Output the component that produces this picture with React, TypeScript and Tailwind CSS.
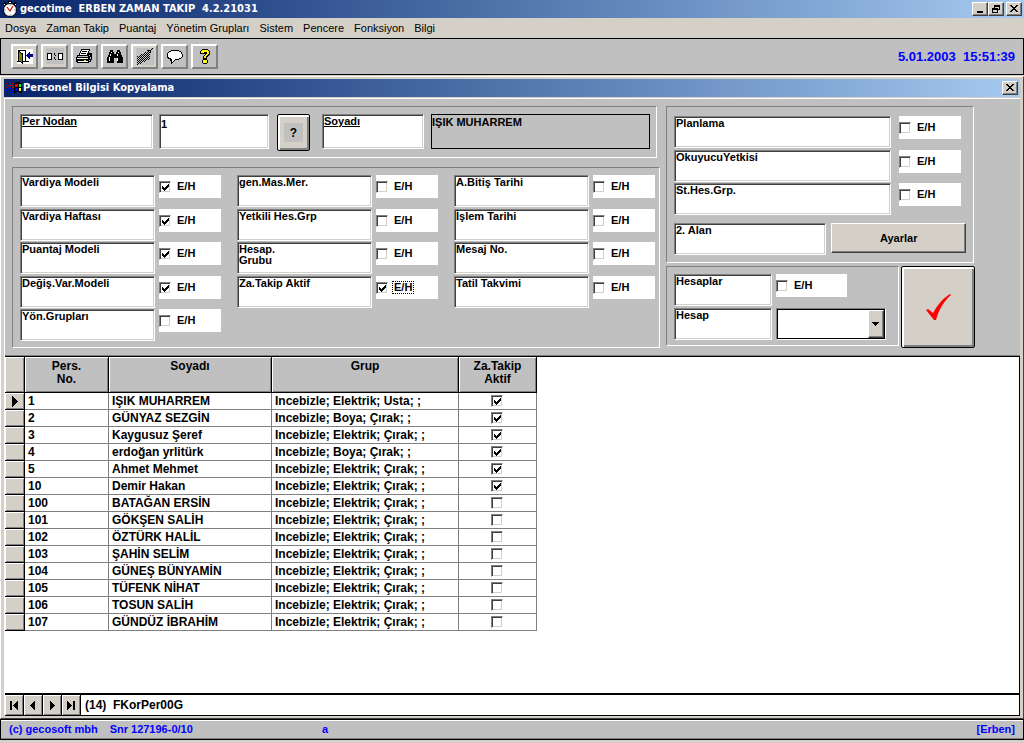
import { useState } from 'react';
import type { ReactNode } from 'react';

const SUNKEN =
    'border border-t-[#808080] border-l-[#808080] border-r-white border-b-white shadow-[inset_1px_1px_0_#404040,inset_-1px_-1px_0_#d4d0c8]';
const GROUP = 'border border-t-[#808080] border-l-[#808080] border-r-white border-b-white';
const RAISED =
    'border border-t-white border-l-white border-r-[#404040] border-b-[#404040] shadow-[inset_-1px_-1px_0_#808080]';
const TOOL =
    'border-2 border-t-white border-l-white border-r-[#808080] border-b-[#808080]';

interface FieldItem {
    id: string;
    label: string;
    checked?: boolean;
    focused?: boolean;
}

const modelFields: FieldItem[] = [
    { id: 'vardiya-modeli', label: 'Vardiya Modeli', checked: true },
    { id: 'vardiya-haftasi', label: 'Vardiya Haftası', checked: true },
    { id: 'puantaj-modeli', label: 'Puantaj Modeli', checked: true },
    { id: 'degis-var-modeli', label: 'Değiş.Var.Modeli', checked: true },
    { id: 'yon-gruplari', label: 'Yön.Grupları' },
];

const accountFields: FieldItem[] = [
    { id: 'gen-mas-mer', label: 'gen.Mas.Mer.' },
    { id: 'yetkili-hes-grp', label: 'Yetkili Hes.Grp' },
    { id: 'hesap-grubu', label: 'Hesap.\nGrubu' },
    { id: 'za-takip-aktif', label: 'Za.Takip Aktif', checked: true, focused: true },
];

const dateFields: FieldItem[] = [
    { id: 'bitis-tarihi', label: 'A.Bitiş Tarihi' },
    { id: 'islem-tarihi', label: 'İşlem Tarihi' },
    { id: 'mesaj-no', label: 'Mesaj No.' },
    { id: 'tatil-takvimi', label: 'Tatil Takvimi' },
];

const planFields: FieldItem[] = [
    { id: 'planlama', label: 'Planlama' },
    { id: 'okuyucu-yetkisi', label: 'OkuyucuYetkisi' },
    { id: 'st-hes-grp', label: 'St.Hes.Grp.' },
];

const people = [
    { no: '1', name: 'IŞIK MUHARREM', group: 'Incebizle; Elektrik; Usta; ;', active: true },
    { no: '2', name: 'GÜNYAZ SEZGİN', group: 'Incebizle; Boya; Çırak; ;', active: true },
    { no: '3', name: 'Kaygusuz Şeref', group: 'Incebizle; Elektrik; Çırak; ;', active: true },
    { no: '4', name: 'erdoğan yrlitürk', group: 'Incebizle; Boya; Çırak; ;', active: true },
    { no: '5', name: 'Ahmet Mehmet', group: 'Incebizle; Elektrik; Çırak; ;', active: true },
    { no: '10', name: 'Demir Hakan', group: 'Incebizle; Elektrik; Çırak; ;', active: true },
    { no: '100', name: 'BATAĞAN ERSİN', group: 'Incebizle; Elektrik; Çırak; ;', active: false },
    { no: '101', name: 'GÖKŞEN SALİH', group: 'Incebizle; Elektrik; Çırak; ;', active: false },
    { no: '102', name: 'ÖZTÜRK HALİL', group: 'Incebizle; Elektrik; Çırak; ;', active: false },
    { no: '103', name: 'ŞAHİN SELİM', group: 'Incebizle; Elektrik; Çırak; ;', active: false },
    { no: '104', name: 'GÜNEŞ BÜNYAMİN', group: 'Incebizle; Elektrik; Çırak; ;', active: false },
    { no: '105', name: 'TÜFENK NİHAT', group: 'Incebizle; Elektrik; Çırak; ;', active: false },
    { no: '106', name: 'TOSUN SALİH', group: 'Incebizle; Elektrik; Çırak; ;', active: false },
    { no: '107', name: 'GÜNDÜZ İBRAHİM', group: 'Incebizle; Elektrik; Çırak; ;', active: false },
];

const menuItems = ['Dosya', 'Zaman Takip', 'Puantaj', 'Yönetim Grupları', 'Sistem', 'Pencere', 'Fonksiyon', 'Bilgi'];

function StopwatchIcon() {
    return (
        <svg className="h-4 w-4" viewBox="0 0 16 16">
            <path d="M6 0h4v2H6zM1 3l2-2 2 2-2 2zM15 3l-2-2-2 2 2 2z" fill="#000" />
            <circle cx="8" cy="9" r="6.5" fill="#fff" stroke="#000" />
            <path d="M7 1h2v1H7zM2 3h1v1H2zM13 3h1v1h-1z" fill="#fff" />
            <path d="M5 6l3 4 3-5" fill="none" stroke="#e00000" strokeWidth="1.2" />
            <path d="M8 3.500v1M8 13.500v1M2.500 9h1M12.500 9h1" stroke="#444" />
        </svg>
    );
}

function FlagIcon() {
    return (
        <svg className="h-3 w-4" viewBox="0 0 16 12" shapeRendering="crispEdges">
            <path d="M9 1h1V0h4v1h2v10h-2v-1h-4v1H8V1z" fill="#000" />
            <path
                d="M0 1h1v1H0zM3 1h1v1H3zM6 1h1v1H6zM1 3h2v1H1zM4 3h1v1H4zM6 3h2v1H6zM0 5h1v1H0zM3 5h1v1H3zM6 5h2v1H6z"
                fill="#c00000"
            />
            <path
                d="M1 6h2v1H1zM4 6h2v1H4zM0 8h1v1H0zM3 8h1v1H3zM5 8h3v1H5zM1 10h1v1H1zM4 10h1v1H4zM6 10h2v1H6z"
                fill="#0000ff"
            />
            <path d="M9 2h3v3H9z" fill="#f00" />
            <path d="M13 2h2v3h-2z" fill="#0f0" />
            <path d="M9 6h3v3H9z" fill="#00f" />
            <path d="M13 6h2v3h-2z" fill="#ff0" />
        </svg>
    );
}

// Toolbar glyphs all share a 19x17 box so they sit on whole pixels inside the buttons
function ToolIcon({ viewBox, children }: { viewBox: string; children: ReactNode }) {
    return (
        <svg className="h-[17px] w-[19px]" viewBox={viewBox} shapeRendering="crispEdges">
            {children}
        </svg>
    );
}

function DoorIcon() {
    return (
        <ToolIcon viewBox="-2 -1 19 17">
            <path d="M0 0h16v15H0z" fill="#fff" />
            <path d="M1 1h8v11h3v1H0v-1h1zM8 2H3v10h5z" fillRule="evenodd" fill="#000" />
            <path d="M1 1h1v1h1v1h1v1h2v11H5v-1H4v-1H1z" fill="#000" />
            <path d="M2 3h1v1h1v1h1v8H4v-1H2z" fill="#808000" />
            <path d="M10 6V5h1V4h1V3h1v2h3v3h-3v2h-1V9h-1V8h-1V7H9V6z" fill="#000080" />
        </ToolIcon>
    );
}

function ClockIcon() {
    return (
        <ToolIcon viewBox="-2 0 19 17">
            <path d="M-1 0h18v16H-1z" fill="#c0c0c0" />
            <path d="M0 5h5v7H0zM11 5h5v7h-5z" fill="#000" />
            <path d="M1 6h3v5H1zM12 6h3v5h-3z" fill="#fff" />
            <path d="M7 5h1v2H7zM8 7h1v1H8zM7 9h1v2H7zM8 11h1v1H8z" fill="#000" />
        </ToolIcon>
    );
}

function PrinterIcon() {
    return (
        <ToolIcon viewBox="-1 -1 19 17">
            <path d="M5 0h9v2h-1v2h3v7h-1v2h-2v1H1v-1H0V8h1V6h2V4h1V2h1z" fill="#000" />
            <path d="M6 1h7v1h-1v2h-1v2H4V4h1V2h1z" fill="#fff" />
            <path d="M6 2h5v1H6zM5 4h5v1H5z" fill="#000" />
            <path d="M2 7h10v1H2z" fill="#c0c0c0" />
            <path d="M1 9h11v1H1zM2 12h10v1H2z" fill="#fff" />
            <path d="M8 11h2v1H8z" fill="#ff0" />
            <path d="M13 6h1v1h-1zM14 8h1v2h-1zM13 11h1v1h-1z" fill="#c0c0c0" />
        </ToolIcon>
    );
}

function BinocularsIcon() {
    return (
        <ToolIcon viewBox="-2 -2 19 17">
            <path d="M3 0h3v2h1v2h2V2h1V0h3v2h1v3h1v2h1v6h-6V8H7v5H0V7h1V5h1V2h1z" fill="#000" />
            <path d="M4 2h1v1H4zM3 4h1v2H3zM2 7h1v4H2zM11 2h1v1h-1zM10 4h1v2h-1zM10 8h1v3h-1z" fill="#fff" />
        </ToolIcon>
    );
}

function PlanIcon() {
    const dots: ReactNode[] = [];
    for (let col = 0; col < 13; col++) {
        const top = 8 - Math.floor(col / 2);
        for (let y = top; y < top + 9; y++) {
            if ((y + col) % 2 === 0) dots.push(<rect key={`${col}-${y}`} x={col} y={y} width="1" height="1" />);
        }
    }
    return (
        <ToolIcon viewBox="-2 0 19 17">
            <path d="M-1 0h18v17H-1z" fill="#c0c0c0" />
            {dots}
            <path d="M10 2h4v1h-4zM13 2h1v3h-1zM12 4h1v1h-1zM14 1h1v1h-1zM15 0h1v1h-1zM11 5h1v1h-1z" fill="#000" />
        </ToolIcon>
    );
}

function BubbleIcon() {
    return (
        <ToolIcon viewBox="-2 -2 19 17">
            <path d="M4 0h8v1h2v1h1v2h1v3h-1v1h-1v1h-2v1H8v1H7v1H6v1H5v1H4v-3H3V9H1V8H0V3h1V2h1V1h2z" fill="#000" />
            <path d="M4 1h8v1h2v2h1v3h-1v1h-2v1H8v1H7v1H6v1H5V9H4V8H2V7H1V3h1V2h2z" fill="#fff" />
        </ToolIcon>
    );
}

function HelpIcon() {
    return (
        <ToolIcon viewBox="-5 -1 19 17">
            <path d="M2 0h6v1h1v1h1v4H9v1H8v1H7v2H3V7h1V6h1V4H4v1H0V2h1V1h1zM3 10h4v1h1v3H7v1H3v-1H2v-3h1z" fill="#000" />
            <path d="M2 1h6v1h1v3H8v1H7v1H6v2H4V7h1V6h1V5h1V3H4v1H1V2h1zM3 11h4v3H3z" fill="#ff0" />
            <path d="M4 3h2v2H4z" fill="#000" />
        </ToolIcon>
    );
}

function Tick() {
    return (
        <svg
            className="pointer-events-none invisible absolute top-[3px] left-[3px] h-[7px] w-[7px] peer-checked:visible"
            viewBox="0 0 7 7"
            shapeRendering="crispEdges"
        >
            <path d="M0 2h1v1h1v1h1V3h1V2h1V1h1V0h1v3H6v1H5v1H4v1H3v1H2V6H1V5H0z" fill="#000" />
        </svg>
    );
}

function CheckBox({ id, label, defaultChecked }: { id?: string; label?: string; defaultChecked?: boolean }) {
    return (
        <span className="relative block h-3 w-3 shrink-0">
            <input
                id={id}
                type="checkbox"
                aria-label={label}
                defaultChecked={defaultChecked}
                className={`peer block h-3 w-3 appearance-none bg-white ${SUNKEN}`}
            />
            <Tick />
        </span>
    );
}

function YesNo({ item, className = 'w-[62px]' }: { item: FieldItem; className?: string }) {
    return (
        <div className={`flex h-[23px] items-center gap-1 bg-white ${className}`}>
            <CheckBox id={item.id} defaultChecked={item.checked} />
            <label
                htmlFor={item.id}
                className={`border border-dotted px-px leading-[11px] ${item.focused ? 'border-black' : 'border-transparent'}`}
            >
                E/H
            </label>
        </div>
    );
}

function Caption({ htmlFor, className, children }: { htmlFor: string; className: string; children: ReactNode }) {
    return (
        <label
            htmlFor={htmlFor}
            className={`block overflow-hidden bg-white px-px pt-px leading-[11px] whitespace-pre ${SUNKEN} ${className}`}
        >
            {children}
        </label>
    );
}

function FieldColumn({ items }: { items: FieldItem[] }) {
    return (
        <div className="grid grid-cols-[135px_62px] grid-rows-[34px_33px_34px_33px_32px] gap-x-1">
            {items.map((item) => (
                <div key={item.id} className="contents">
                    <Caption htmlFor={item.id} className="h-8">
                        {item.label}
                    </Caption>
                    <YesNo item={item} />
                </div>
            ))}
        </div>
    );
}

function WindowButton({ label, children }: { label: string; children: ReactNode }) {
    return (
        <button
            type="button"
            aria-label={label}
            className={`flex h-[14px] w-4 items-center justify-center bg-[#d4d0c8] ${RAISED}`}
        >
            <svg className="h-2 w-2" viewBox="0 0 8 8" shapeRendering="crispEdges">
                {children}
            </svg>
        </button>
    );
}

const closeGlyph = (
    <path d="M0 0h2v1h1v1h2V1h1V0h2v1H7v1H6v1H5v1h1v1h1v1h1v1H6V6H5V5H3v1H2v1H0V6h1V5h1V4h1V3H2V2H1V1H0z" />
);

function Toolbar() {
    const tools = [
        { label: 'Çıkış', icon: <DoorIcon />, face: 'bg-[#d4d0c8]' },
        { label: 'Saat', icon: <ClockIcon />, face: 'bg-[#d4d0c8]' },
        { label: 'Yazdır', icon: <PrinterIcon />, face: 'bg-[#c0c0c0]' },
        { label: 'Ara', icon: <BinocularsIcon />, face: 'bg-[#c0c0c0]' },
        { label: 'Plan', icon: <PlanIcon />, face: 'bg-[#d4d0c8]' },
        { label: 'Mesaj', icon: <BubbleIcon />, face: 'bg-[#c0c0c0]' },
        { label: 'Yardım', icon: <HelpIcon />, face: 'bg-[#c0c0c0]' },
    ];

    return (
        <div className="flex h-[37px] items-center justify-between border border-black bg-[#c0c0c0] pr-2 pl-[10px]">
            <div className="flex gap-[3px]">
                {tools.map((tool) => (
                    <button
                        key={tool.label}
                        type="button"
                        aria-label={tool.label}
                        className={`flex h-[25px] w-[27px] items-center justify-center ${tool.face} ${TOOL}`}
                    >
                        {tool.icon}
                    </button>
                ))}
            </div>
            <div className="text-[13px] font-bold whitespace-pre text-[#0000ff]">5.01.2003{'  '}15:51:39</div>
        </div>
    );
}

function CopyForm() {
    const [personNo, setPersonNo] = useState('1');

    return (
        <form className="flex items-start gap-[6px] border-b border-[#808080] bg-[#c0c0c0] p-[7px] text-[11px] font-bold">
            <div className="flex flex-col items-start gap-[9px]">
                <div className={`flex items-start pt-[7px] pr-[6px] pb-[6px] pl-[7px] ${GROUP}`}>
                    <Caption htmlFor="per-no" className="mr-[6px] h-[35px] w-[133px] underline">
                        Per Nodan
                    </Caption>
                    <input
                        id="per-no"
                        value={personNo}
                        onChange={(e) => setPersonNo(e.target.value)}
                        className={`mr-2 h-[35px] w-[110px] bg-white px-px pb-4 ${SUNKEN}`}
                    />
                    <button
                        type="button"
                        aria-label="Personel ara"
                        className="mr-3 flex h-[37px] w-[33px] items-center justify-center rounded-[2px] border border-black bg-[#d4d0c8] shadow-[inset_2px_2px_0_#fff,inset_-2px_-2px_0_#808080]"
                    >
                        <span className="flex h-[19px] w-[19px] items-center justify-center bg-[#c0c0c0] text-xs">?</span>
                    </button>
                    <Caption htmlFor="soyadi" className="mr-[7px] h-[35px] w-[102px] underline">
                        Soyadı
                    </Caption>
                    <output id="soyadi" className="h-[35px] w-[219px] border border-black leading-[14px]">
                        IŞIK MUHARREM
                    </output>
                </div>

                <div className={`flex gap-4 pt-[7px] pr-1 pb-[6px] pl-[7px] ${GROUP}`}>
                    <FieldColumn items={modelFields} />
                    <FieldColumn items={accountFields} />
                    <FieldColumn items={dateFields} />
                </div>
            </div>

            <div className="flex flex-col items-start gap-[3px]">
                <div className={`w-[308px] px-[7px] pt-[9px] pb-[7px] ${GROUP}`}>
                    <div className="grid grid-cols-[217px_62px] grid-rows-[34px_33px_32px] gap-x-2">
                        {planFields.map((item) => (
                            <div key={item.id} className="contents">
                                <Caption htmlFor={item.id} className="h-8">
                                    {item.label}
                                </Caption>
                                <YesNo item={item} />
                            </div>
                        ))}
                    </div>
                    <div className="mt-2 flex items-start gap-[5px]">
                        <Caption htmlFor="ayarlar" className="h-8 w-[153px]">
                            2. Alan
                        </Caption>
                        <button id="ayarlar" type="button" className={`h-[30px] w-[135px] bg-[#d4d0c8] ${RAISED}`}>
                            Ayarlar
                        </button>
                    </div>
                </div>

                <div className="flex items-start gap-[2px]">
                    <div className={`grid w-[233px] grid-cols-[98px_auto] gap-x-1 gap-y-[2px] pt-[7px] pb-[5px] pl-[7px] ${GROUP}`}>
                        <Caption htmlFor="hesaplar" className="h-8">
                            Hesaplar
                        </Caption>
                        <YesNo item={{ id: 'hesaplar', label: 'Hesaplar' }} className="w-[71px]" />
                        <Caption htmlFor="hesap" className="h-8">
                            Hesap
                        </Caption>
                        <div className="relative h-8 w-[110px]">
                            <select
                                id="hesap"
                                className="h-8 w-full appearance-none border border-t-[#808080] border-r-white border-b-white border-l-[#808080] bg-white shadow-[inset_0_0_0_1px_#000]"
                            />
                            <span
                                className={`pointer-events-none absolute top-[2px] right-[2px] flex h-7 w-4 items-center justify-center bg-[#d4d0c8] ${RAISED}`}
                            >
                                <svg className="h-1 w-2" viewBox="0 0 8 4" shapeRendering="crispEdges">
                                    <path d="M0 0h7v1H6v1H5v1H4v1H3V3H2V2H1V1H0z" />
                                </svg>
                            </span>
                        </div>
                    </div>
                    <button
                        type="button"
                        aria-label="Onayla"
                        className="flex h-[82px] w-[74px] items-center justify-center rounded-[2px] border border-black bg-[#d4d0c8] shadow-[inset_2px_2px_0_#fff,inset_-2px_-2px_0_#808080]"
                    >
                        <svg className="h-[26px] w-[26px]" viewBox="0 0 26 26">
                            <path d="M1 16l2-1 5 4c4-7 9-14 17-19l1 1C19 7 14 15 11 26H9z" fill="#f00" />
                        </svg>
                    </button>
                </div>
            </div>
        </form>
    );
}

const HEAD_CELL =
    'border-r border-b border-black bg-[#c0c0c0] align-top leading-[13px] pt-[3px] shadow-[inset_1px_1px_0_#fff,inset_-1px_-1px_0_#808080]';
const BODY_CELL = 'border-r border-b border-[#808080] p-0 whitespace-nowrap';
const ROW_HEAD =
    'border-r border-b border-black bg-[#d4d0c8] p-0 shadow-[inset_1px_1px_0_#fff,inset_-1px_-1px_0_#808080]';

function PeopleTable() {
    return (
        <table className="w-[532px] table-fixed border-separate border-spacing-0 text-xs leading-4 font-bold">
            <colgroup>
                <col className="w-5" />
                <col className="w-[84px]" />
                <col className="w-[163px]" />
                <col className="w-[187px]" />
                <col className="w-[78px]" />
            </colgroup>
            <thead>
                <tr className="h-9">
                    <td className={ROW_HEAD} />
                    <th className={HEAD_CELL}>
                        Pers.
                        <br />
                        No.
                    </th>
                    <th className={HEAD_CELL}>Soyadı</th>
                    <th className={HEAD_CELL}>Grup</th>
                    <th className={HEAD_CELL}>
                        Za.Takip
                        <br />
                        Aktif
                    </th>
                </tr>
            </thead>
            <tbody>
                {people.map((person, index) => (
                    <tr key={person.no} className="h-[17px]">
                        <td className={ROW_HEAD}>
                            {index === 0 && (
                                <svg className="ml-[7px] block h-[11px] w-[6px]" viewBox="0 0 6 11" shapeRendering="crispEdges">
                                    <path d="M0 0l6 5.500L0 11z" />
                                </svg>
                            )}
                        </td>
                        <td className={BODY_CELL}>
                            <div className="pl-[3px]">{person.no}</div>
                        </td>
                        <td className={BODY_CELL}>
                            <div className="pl-[3px]">{person.name}</div>
                        </td>
                        <td className={BODY_CELL}>
                            <div className="pl-[3px]">{person.group}</div>
                        </td>
                        <td className={BODY_CELL}>
                            <div className="flex justify-center pr-px">
                                <CheckBox label={`${person.name} Za.Takip Aktif`} defaultChecked={person.active} />
                            </div>
                        </td>
                    </tr>
                ))}
            </tbody>
        </table>
    );
}

function RecordNav() {
    const steps = [
        { label: 'İlk kayıt', d: 'M0 0h2v9H0zM8 0v9L3 4.500z' },
        { label: 'Önceki kayıt', d: 'M6 0v9L1 4.500z' },
        { label: 'Sonraki kayıt', d: 'M2 0v9l5-4.500z' },
        { label: 'Son kayıt', d: 'M0 0v9l5-4.500zM6 0h2v9H6z' },
    ];

    return (
        <div className="flex h-[21px] items-stretch border-b border-black bg-white">
            {steps.map((step) => (
                <button
                    key={step.label}
                    type="button"
                    aria-label={step.label}
                    className="flex w-[19px] items-center justify-center border-r border-black bg-[#d4d0c8] shadow-[inset_1px_1px_0_#fff,inset_-1px_-1px_0_#808080]"
                >
                    <svg className="h-[9px] w-2" viewBox="0 0 8 9" shapeRendering="crispEdges">
                        <path d={step.d} />
                    </svg>
                </button>
            ))}
            <span className="self-center pl-1 text-xs font-bold whitespace-pre">(14){'  '}FKorPer00G</span>
        </div>
    );
}

export default function App() {
    return (
        <div className="flex min-h-screen flex-col bg-[#d4d0c8] font-['Liberation_Sans',Arial,sans-serif] text-black">
            <header className="flex h-[18px] items-center justify-between bg-linear-to-r from-[#0a246a] to-[#a6caf0] pr-[2px] pl-[2px]">
                <div className="flex items-center gap-[2px]">
                    <StopwatchIcon />
                    <h1 className="font-['DejaVu_Sans_Condensed','DejaVu_Sans',sans-serif] text-[11px] font-bold whitespace-pre text-white">
                        gecotime{'  '}ERBEN ZAMAN TAKIP{'  '}4.2.21031
                    </h1>
                </div>
                <div className="flex">
                    <WindowButton label="Simge durumuna küçült">
                        <path d="M1 6h6v2H1z" />
                    </WindowButton>
                    <WindowButton label="Önceki boyut">
                        <path d="M2 0h6v5H6V4h1V2H3v1H2zM0 3h6v5H0zM1 5v2h4V5z" fillRule="evenodd" />
                    </WindowButton>
                    <span className="w-[2px]" />
                    <WindowButton label="Kapat">{closeGlyph}</WindowButton>
                </div>
            </header>

            <nav className="flex h-5 items-center gap-[10px] px-[5px] text-[11px]">
                {menuItems.map((item) => (
                    <a key={item} href="#">
                        {item}
                    </a>
                ))}
            </nav>

            <Toolbar />

            <main className="mt-px flex flex-1 flex-col border border-t-white border-r-[#404040] border-b-[#404040] border-l-white px-[3px] pt-[2px] pb-[2px]">
                <div className="flex h-[18px] shrink-0 items-center justify-between bg-linear-to-r from-[#0a246a] to-[#a6caf0] pr-[2px] pl-[2px]">
                    <div className="flex items-center gap-px">
                        <FlagIcon />
                        <h2 className="font-['DejaVu_Sans_Condensed','DejaVu_Sans',sans-serif] text-[11px] font-bold text-white">
                            Personel Bilgisi Kopyalama
                        </h2>
                    </div>
                    <WindowButton label="Kapat">{closeGlyph}</WindowButton>
                </div>
                <div className="mt-px flex flex-1 flex-col border-t border-l border-white">
                    <CopyForm />
                    <div className="flex flex-1 flex-col border-t border-r border-black bg-white">
                        <div className="flex-1 border-b-2 border-black">
                            <PeopleTable />
                        </div>
                        <RecordNav />
                    </div>
                </div>
            </main>

            <footer className="mb-[3px] grid h-[21px] shrink-0 grid-cols-[313px_1fr_auto] items-center border border-black bg-[#c0c0c0] px-2 text-[11px] font-bold text-[#0000ff] shadow-[inset_0_1px_0_#fff,inset_0_-1px_0_#808080]">
                <div className="flex gap-3">
                    <span>(c) gecosoft mbh</span>
                    <span>Snr 127196-0/10</span>
                </div>
                <span>a</span>
                <span>[Erben]</span>
            </footer>
        </div>
    );
}
